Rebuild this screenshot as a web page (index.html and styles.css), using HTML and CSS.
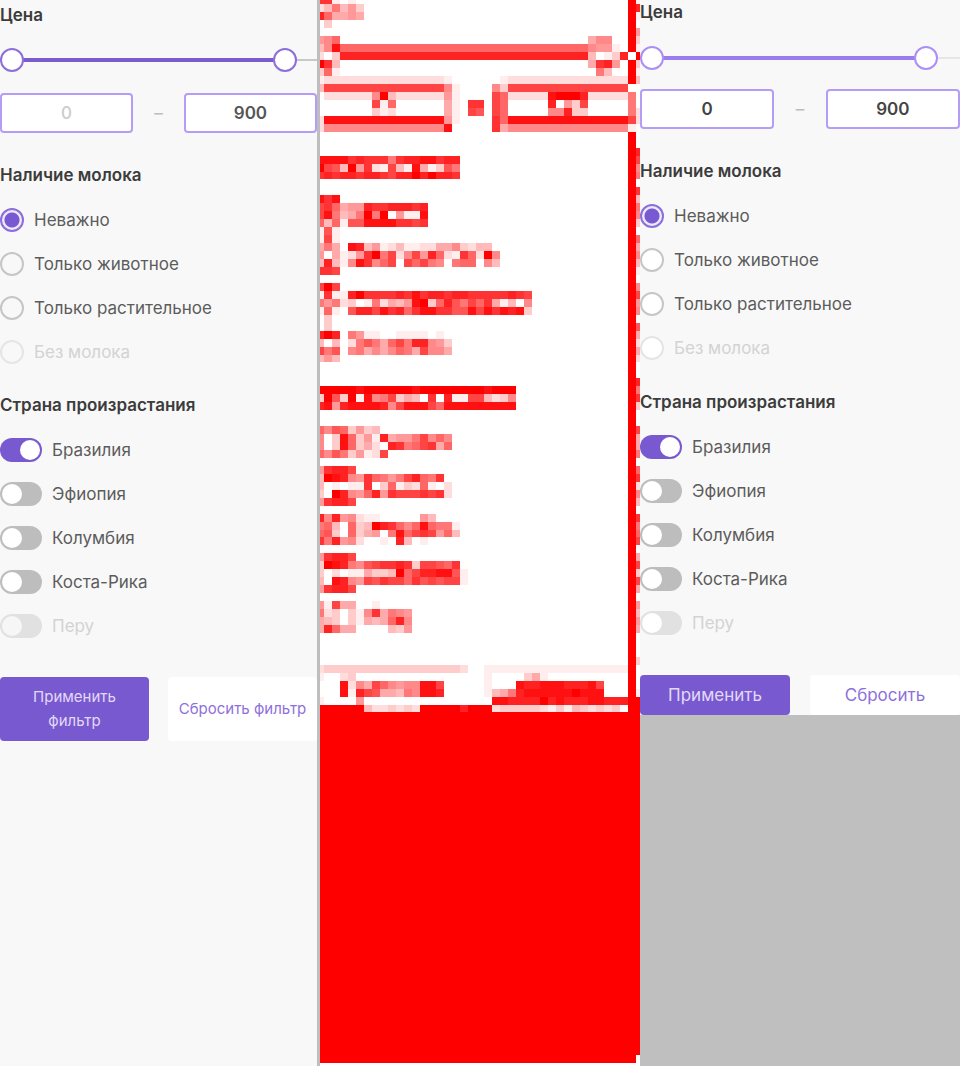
FILE: index.html
```html
<!DOCTYPE html>
<html lang="ru">
<head>
<meta charset="utf-8">
<title>Фильтр</title>
<link rel="stylesheet" href="styles.css">
</head>
<body>
<main class="compare">
  <form class="panel panel-first">
    <fieldset class="group price">
      <legend class="title">Цена</legend>
      <div class="slider">
        <span class="slider-line"></span><span class="slider-fill"></span>
        <input type="range" aria-label="Цена от" min="0" max="966" value="0">
        <input type="range" aria-label="Цена до" min="0" max="966" value="900">
      </div>
      <div class="amounts">
        <input class="amount" type="text" aria-label="От" placeholder="0">
        <span class="dash">–</span>
        <input class="amount" type="text" aria-label="До" value="900">
      </div>
    </fieldset>
    <fieldset class="group options">
      <legend class="title">Наличие молока</legend>
      <label class="option"><input class="radio" type="radio" name="milk-a" checked>Неважно</label>
      <label class="option"><input class="radio" type="radio" name="milk-a">Только животное</label>
      <label class="option"><input class="radio" type="radio" name="milk-a">Только растительное</label>
      <label class="option off"><input class="radio" type="radio" name="milk-a" disabled>Без молока</label>
    </fieldset>
    <fieldset class="group options">
      <legend class="title">Страна произрастания</legend>
      <label class="option"><input class="toggle" type="checkbox" checked>Бразилия</label>
      <label class="option"><input class="toggle" type="checkbox">Эфиопия</label>
      <label class="option"><input class="toggle" type="checkbox">Колумбия</label>
      <label class="option"><input class="toggle" type="checkbox">Коста-Рика</label>
      <label class="option off"><input class="toggle" type="checkbox" disabled>Перу</label>
    </fieldset>
    <div class="actions">
      <button class="button primary" type="button">Применить фильтр</button>
      <button class="button" type="button">Сбросить фильтр</button>
    </div>
  </form>

  <svg id="diff" class="diff" viewBox="0 0 320 1066" preserveAspectRatio="none" role="img" aria-label="Карта различий"></svg>

  <div class="side">
    <form class="panel panel-second">
      <fieldset class="group price">
        <legend class="title">Цена</legend>
        <div class="slider">
          <span class="slider-line"></span><span class="slider-fill"></span>
          <input type="range" aria-label="Цена от" min="0" max="972" value="0">
          <input type="range" aria-label="Цена до" min="0" max="972" value="900">
        </div>
        <div class="amounts">
          <input class="amount" type="text" aria-label="От" value="0">
          <span class="dash">–</span>
          <input class="amount" type="text" aria-label="До" value="900">
        </div>
      </fieldset>
      <fieldset class="group options">
        <legend class="title">Наличие молока</legend>
        <label class="option"><input class="radio" type="radio" name="milk-b" checked>Неважно</label>
        <label class="option"><input class="radio" type="radio" name="milk-b">Только животное</label>
        <label class="option"><input class="radio" type="radio" name="milk-b">Только растительное</label>
        <label class="option off"><input class="radio" type="radio" name="milk-b" disabled>Без молока</label>
      </fieldset>
      <fieldset class="group options">
        <legend class="title">Страна произрастания</legend>
        <label class="option"><input class="toggle" type="checkbox" checked>Бразилия</label>
        <label class="option"><input class="toggle" type="checkbox">Эфиопия</label>
        <label class="option"><input class="toggle" type="checkbox">Колумбия</label>
        <label class="option"><input class="toggle" type="checkbox">Коста-Рика</label>
        <label class="option off"><input class="toggle" type="checkbox" disabled>Перу</label>
      </fieldset>
      <div class="actions">
        <button class="button primary" type="button">Применить</button>
        <button class="button" type="button">Сбросить</button>
      </div>
    </form>
  </div>
</main>
<script src="diff.js"></script>
</body>
</html>
```

FILE: styles.css
```css
* { box-sizing: border-box; }

body {
  margin: 0;
  background: #bfbfbf;
  color: #5c5c5c;
  font: 17px/24px Inter, "Noto Sans", sans-serif;
}

.compare {
  display: grid;
  grid-template-columns: repeat(3, minmax(0, 1fr));
}

.panel { background: #f8f8f8; }
.panel-first { padding-top: 3px; border-right: 3px solid #bebebe; }

.diff { display: block; width: 100%; background: #fff; }

.group { margin: 0 0 29px; padding: 0; border: 0; min-width: 0; }
.price { margin-bottom: 30px; }
.title {
  display: block;
  margin-bottom: 21px;
  padding: 0;
  color: #3c3c3c;
  font-weight: 600;
}

.slider { display: grid; align-items: center; height: 24px; margin-bottom: 21px; }
.slider > * { grid-area: 1 / 1; }
.slider-line { height: 2px; background: #c8c8c8; }
.slider-fill { height: 4px; width: 86%; margin-left: 12px; background: #7b5cd0; }
.slider input {
  appearance: none;
  width: 100%;
  height: 24px;
  margin: 0;
  background: none;
  pointer-events: none;
}
.slider input::-webkit-slider-thumb {
  appearance: none;
  width: 24px;
  height: 24px;
  border: 2px solid #8c6fdb;
  border-radius: 50%;
  background: #fff;
  pointer-events: auto;
}

.amounts { display: grid; grid-template-columns: 42% 1fr 42%; align-items: center; }
.amount {
  width: 100%;
  height: 40px;
  padding: 0;
  border: 2px solid #b59cf7;
  border-radius: 4px;
  background: #fff;
  color: #555;
  font: inherit;
  font-weight: 600;
  text-align: center;
}
.amount::placeholder { color: #ccc; font-weight: 500; }
.dash { color: #bdbdbd; text-align: center; }

.option { display: flex; align-items: center; gap: 10px; margin-bottom: 20px; }
.option:last-child { margin-bottom: 0; }
.off { color: #d3d3d3; }

.radio {
  appearance: none;
  width: 24px;
  height: 24px;
  margin: 0;
  border: 2px solid #c6c6c6;
  border-radius: 50%;
}
.radio:checked {
  border-color: #8b6ed9;
  background: radial-gradient(circle, #7859cf 7px, #eee8fb 8px);
}
.radio:disabled { border-color: #e5e5e5; }

.toggle {
  appearance: none;
  width: 42px;
  height: 24px;
  margin: 0;
  padding: 2px;
  border-radius: 12px;
  background: #bdbdbd;
}
.toggle::before {
  content: "";
  display: block;
  width: 20px;
  height: 20px;
  border-radius: 50%;
  background: #fff;
}
.toggle:checked { background: #7859cf; }
.toggle:checked::before { margin-left: auto; }
.toggle:disabled { background: #e1e1e1; }
.panel-first .toggle:disabled::before { background: #f6f6f6; }

.actions { display: grid; grid-template-columns: 1fr 1fr; gap: 19px; padding-top: 10px; }
.button {
  padding: 8px 0;
  border: 0;
  border-radius: 4px;
  background: #fff;
  color: #8e70dc;
  font: inherit;
}
.panel-first .button { padding: 8px 4px; font-size: 15px; }
.primary { background: #7859cf; color: #e2d9f8; }
.panel-first .primary { padding: 8px 24px; }

.panel-second .group { margin-bottom: 30px; }
.panel-second .price .title { margin-bottom: 22px; }
.panel-second .slider { margin-bottom: 19px; }
.panel-second .slider-line { background: #e6e6e6; }
.panel-second .slider-fill { background: #9a7cf0; }
.panel-second .slider input::-webkit-slider-thumb { border-color: #ab8ff5; }
.panel-second .amount { color: #444; }
.panel-second .radio:not(:checked) { background: #fff; }
.panel-second .actions { gap: 20px; }
```

FILE: diff.js
```js
// Each row: top edge, then "column:levels" runs; a level is a hex digit, "2*15" repeats it.
const rows = `
0 0:cc101 39:f1
4 0:248463 39:fd
12 0:d95565 39:f1
20 1:3 39:f
28 39:f6
36 0:679 34:577 39:f3
44 0:47e 3:9*31 34:766101 39:f1
52 0:203 3:d*31 34:4013d0f
60 0:fc4 34:5cd6 39:f3
68 0:391 35:84 39:f1
76 0:1 1:2*15 16:1 23:1 24:2*15 39:f4
84 0:4 1:b*15 16:71 22:73 24:b*15
92 1:2*6 7:7f4 10:2*6 16:61 22:b9 24:2*5 29:efffd 34:2*5 39:8
100 7:b19 16:51 19:cc 22:b9 29:d063b 39:8
108 7:312 16:51 19:ba 22:b9 29:77d33 39:82
116 0:2 1:e*15 16:61 22:c9 24:e*15 39:b2
124 0:2 1:7*15 16:e 22:c5 24:7*15 39:1
132 39:f
140 39:f
148 39:fd
156 0:eeeecdccc8cddeecdd 39:fb
164 0:fba4f6c21b41e513a8 39:f7
172 0:cdcddcddcbddfdfddc 39:f8
179 39:f
187 39:fc
195 0:ece 39:f4
203 0:bc9566dccdddcd 39:f8
211 0:be8458f8f0611e 39:f7
219 0:9491aaeeeeccbc 39:f3
227 0:1a1 39:f
235 0:1b1 39:f9
243 0:5850ed4612411225573244 39:f5
251 0:605126cf8b27b6d921c92f7 39:f7
259 0:4d417ec79b0b9b870899074 39:f4
267 0:ccb 39:f1
275 39:f
283 0:bfb 39:f7
291 0:1c11dfccccdcecddcddcccccdcb 39:fb
299 0:868230182546ef39da8b9c51407 39:f6
307 0:1910addbecd9ceeccaaebecede3 39:f7
315 0:03 39:f
323 0:03 39:fa
331 0:dfd086110011110100 39:f5
339 0:404028a859b8dd763 39:f2
347 0:b8a0785757985b775 39:f5
355 0:464 39:f2
362 39:f
370 39:f
378 39:fd
386 0:fffffeffffffeffffffffefff 39:f8
394 0:3fa3f1e78b3540c0d11bb4237 39:fc
402 0:de6deeeed7beeeb9eeeeeeeee 39:f3
410 39:f
418 39:f
426 0:97a93634 39:fb
434 0:703e9361d5668b797 39:f5
442 0:703e93520dc89bc59 39:f5
450 0:97a83612b 39:f8
458 39:f
466 0:6cddb 39:f9
474 0:4fed76c9868bd98c 39:fc
482 0:401011c0391329102 39:f2
490 0:30fd769d6cbbbcbc2 39:f7
498 0:6cddb 39:f4
506 39:f
514 0:d7d67211 13:64 39:fc
522 0:8940934fdc979e9881 39:f8
530 0:9a30935608e9bcb694 39:f9
537 0:c8d6720010d401 39:fb
545 39:f
553 0:6cddb 39:f5
561 0:3fed87abccdc3bba9c 39:fb
569 0:3020115334f9bddeea1 39:f3
577 0:40ed76bacbb9cababb1 39:fb
585 0:6cddb 39:f5
593 39:f
601 0:61b55001 39:f6
609 0:8230317c5876 39:f4
617 0:5430315459d7 39:f6
625 0:5d955 9:436 39:f5
633 39:f
641 39:f
649 39:f
657 39:f3
665 0:2 1:3*17 18:2 21:1*18 39:f
673 0:1 3:23 21:1 26:351 39:f
681 3:e275b97677eeb 21:1 25:eddeeedddeb 39:f
689 3:e1dba55487eed 21:1 22:458deeeeeefeee 39:f1
697 0:1 5:6 22:eeddddfdedddeeddd 39:ff
705 0:ffffff4223232fffffdfff 22:23333321314323230 39:ff`.trim().split("\n");

const svg = document.getElementById("diff");

function cell(x, y, width, height, level) {
  const rect = document.createElementNS("http://www.w3.org/2000/svg", "rect");
  const tone = 255 - level * 17;
  rect.setAttribute("x", x);
  rect.setAttribute("y", y);
  rect.setAttribute("width", width);
  rect.setAttribute("height", height);
  rect.setAttribute("fill", `rgb(255,${tone},${tone})`);
  svg.append(rect);
}

rows.forEach((row, i) => {
  const [top, ...runs] = row.split(" ");
  const y = Number(top);
  const bottom = i + 1 < rows.length ? parseInt(rows[i + 1], 10) : 712;
  for (const run of runs) {
    const [start, body] = run.split(":");
    const [digits, times] = body.split("*");
    [...digits.repeat(Number(times || 1))].forEach((digit, k) => {
      const column = Number(start) + k;
      const x = column ? column * 8 - 4 : 0;
      const width = column === 0 || column === 40 ? 4 : 8;
      if (digit !== "0") cell(x, y, width, bottom - y, parseInt(digit, 16));
    });
  }
});
cell(0, 712, 316, 351, 15);
cell(316, 712, 4, 343, 15);
```
